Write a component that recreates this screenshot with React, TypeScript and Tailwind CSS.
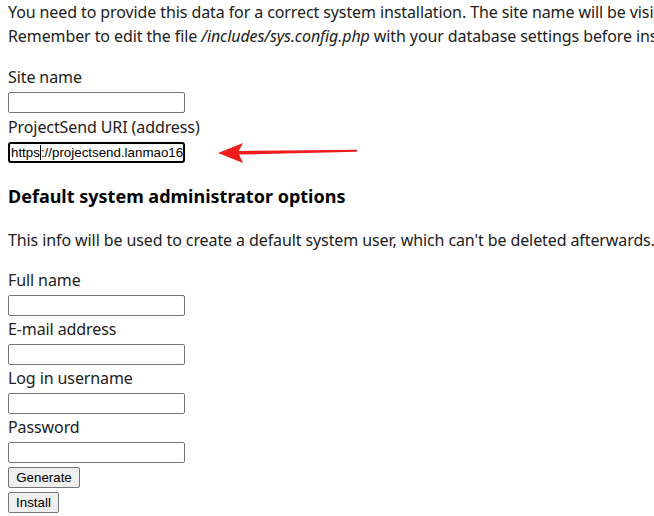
import React from "react";

function Field({ label, first }: { label: string; first?: boolean }) {
  return (
    <div className={first ? "" : "mt-px"}>
      <label className="block">{label}</label>
      <input
        type="text"
        className="mt-[3px] block h-[21px] w-[177px] rounded-[2px] border border-[#767676] bg-white px-[2px] font-['Liberation_Sans',Arial,sans-serif] text-[13.33px] outline-none"
      />
    </div>
  );
}

export default function App() {
  return (
    <div className="relative h-[516px] w-full overflow-hidden bg-white px-2 font-['Noto_Sans',sans-serif] text-[16px] leading-6 tracking-[-0.1px] text-[#212121]">
      <p className="whitespace-nowrap">
        You need to provide this data for a correct system installation. The site name will be visible in the system panel and the client's lists.
        <br />
        Remember to edit the file <em>/includes/sys.config.php</em> with your database settings before installing.
      </p>

      <div className="mt-[17px]">
        <Field label="Site name" first />
        <div className="mt-[2px]">
          <label className="block">ProjectSend URI (address)</label>
          <div className="mt-[3px] flex h-[21px] w-[177px] items-center overflow-hidden whitespace-nowrap rounded-[3px] border-2 border-black bg-white pl-[1px] font-['Liberation_Sans',Arial,sans-serif] text-[13.33px] leading-none tracking-normal text-black">
            <span>https</span>
            <span className="h-[15px] w-px shrink-0 bg-black" />
            <span>://projectsend.lanmao16.com/</span>
          </div>
        </div>
      </div>

      <h2 className="mt-5 text-[18px] font-bold leading-[27px] tracking-normal text-black">
        Default system administrator options
      </h2>

      <p className="mt-[18px] whitespace-nowrap">
        This info will be used to create a default system user, which can't be deleted afterwards.
      </p>

      <div className="mt-4">
        <Field label="Full name" first />
        <Field label="E-mail address" />
        <Field label="Log in username" />
        <Field label="Password" />
      </div>

      <div className="mt-1 flex flex-col items-start gap-1 font-['Liberation_Sans',Arial,sans-serif] text-[13.33px] tracking-normal text-black">
        <button
          type="button"
          className="flex h-[21px] w-[72px] items-center justify-center rounded-[2px] border border-[#767676] bg-[#efefef]"
        >
          Generate
        </button>
        <button
          type="button"
          className="flex h-[21px] w-[51px] items-center justify-center rounded-[2px] border border-[#767676] bg-[#efefef]"
        >
          Install
        </button>
      </div>

      <svg
        className="pointer-events-none absolute left-[210px] top-[138px]"
        width="150"
        height="30"
        viewBox="0 0 150 30"
      >
        <polygon points="8,15 33,5 28,14.3 33,25" fill="#ef1d1d" />
        <polygon points="27,13 147,11.8 147,13.8 27,16.6" fill="#ef1d1d" />
      </svg>
    </div>
  );
}
